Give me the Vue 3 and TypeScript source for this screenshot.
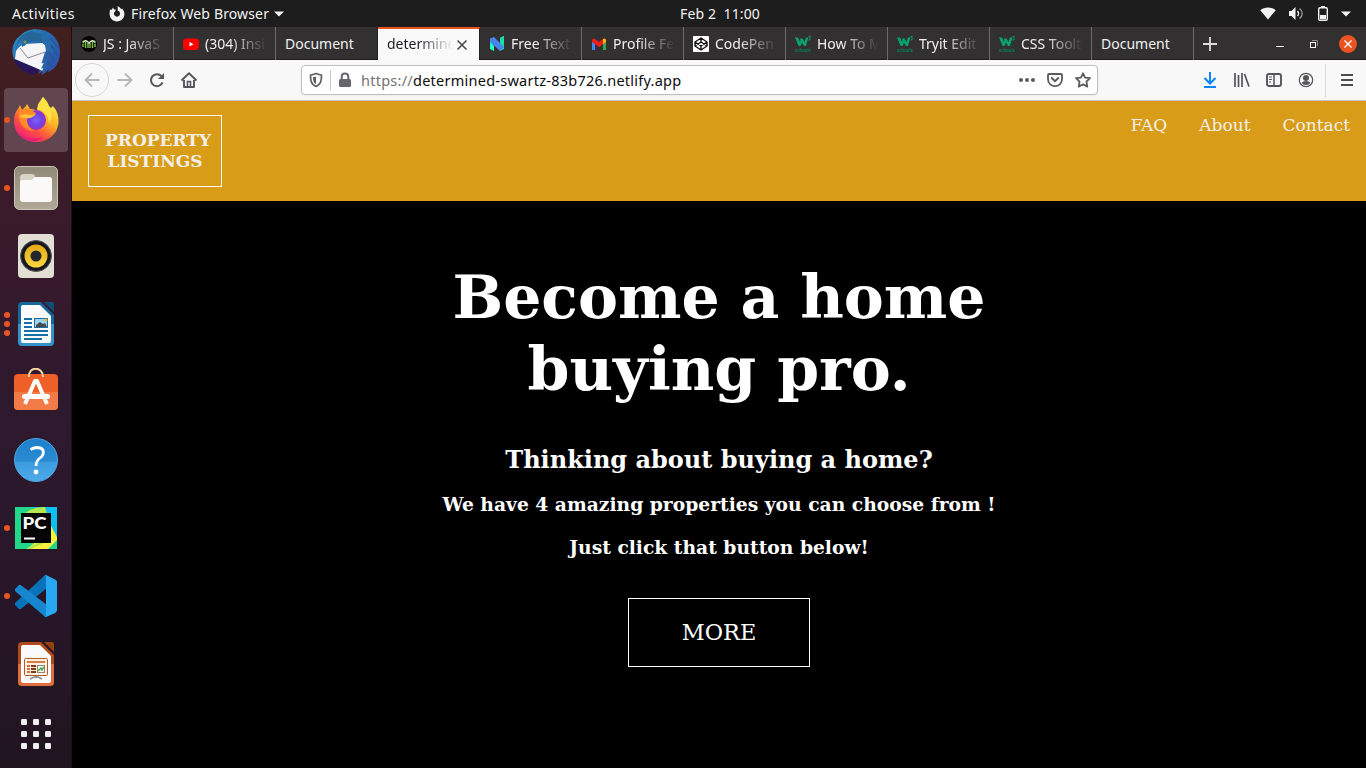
<script setup lang="ts">
interface Tab {
  title: string
  icon: string
  active?: boolean
}

const tabs: Tab[] = [
  { title: 'JS : JavaS', icon: 'js' },
  { title: '(304) Insi', icon: 'youtube' },
  { title: 'Document', icon: '' },
  { title: 'determine', icon: '', active: true },
  { title: 'Free Text', icon: 'netlify' },
  { title: 'Profile Fe', icon: 'gmail' },
  { title: 'CodePen', icon: 'codepen' },
  { title: 'How To M', icon: 'w3' },
  { title: 'Tryit Edit', icon: 'w3' },
  { title: 'CSS Toolt', icon: 'w3' },
  { title: 'Document', icon: '' },
]

interface DockItem {
  name: string
  windows: number
  focused?: boolean
}

const dock: DockItem[] = [
  { name: 'thunderbird', windows: 0 },
  { name: 'firefox', windows: 1, focused: true },
  { name: 'files', windows: 1 },
  { name: 'rhythmbox', windows: 0 },
  { name: 'writer', windows: 3 },
  { name: 'software', windows: 0 },
  { name: 'help', windows: 0 },
  { name: 'pycharm', windows: 1 },
  { name: 'vscode', windows: 1 },
  { name: 'impress', windows: 0 },
  { name: 'apps', windows: 0 },
]

const navLinks: string[] = ['FAQ', 'About', 'Contact']
</script>

<template>
  <div class="desktop">
    <header class="topbar">
      <div class="top-left">
        <span class="activities">Activities</span>
        <svg width="16" height="16" viewBox="0 0 16 16">
          <path d="M1.2 3.2 2.6 4.1 4 1.6 5 3.4 7 3.6 6 5.600 5 6.800C4.700 9 6 10.700 8 10.700c2 0 3-1.400 3-3.100C11 5.900 10 5 8.800 4.800L8.600.300C10.500.900 12 2.500 12.200 3.400L13 2.600C14.700 4 15.400 6 15.400 8.100 15.400 12.300 12.100 15.500 8 15.500S.6 12.300.6 8.100C.6 6.300.7 4.600 1.200 3.200Z" fill="#f2f2f2" />
        </svg>
        <span class="app-name">Firefox Web Browser</span>
        <svg class="caret" width="10" height="6" viewBox="0 0 10 6"><path d="M0 .5H10L5 5.500Z" fill="#f2f2f2" /></svg>
      </div>
      <div class="clock">Feb 2&nbsp; 11:00</div>
      <div class="tray">
        <svg width="16" height="14" viewBox="0 0 16 14"><path d="M.3 3.200C4.500-.300 11.500-.300 15.700 3.200L8 12.500Z" fill="#f2f2f2" /></svg>
        <svg width="16" height="16" viewBox="0 0 16 16">
          <path d="M1 5H3.500L7.500 1V14L3.500 10H1Z" fill="#f2f2f2" />
          <path d="M9.500 5C10.800 6.500 10.800 8.500 9.500 10" fill="none" stroke="#f2f2f2" stroke-width="1.300" />
          <path d="M11.500 2.500C15.200 5.200 15.200 9.800 11.500 12.500" fill="none" stroke="#999" stroke-width="1.300" />
        </svg>
        <svg width="10" height="16" viewBox="0 0 10 16">
          <path d="M3 0H7V2H3Z" fill="#f2f2f2" />
          <rect x=".7" y="1.700" width="8.600" height="12.600" rx="1.300" fill="none" stroke="#f2f2f2" stroke-width="1.400" />
          <rect x="2" y="9" width="6" height="4" fill="#f2f2f2" />
        </svg>
        <svg width="10" height="6" viewBox="0 0 10 6"><path d="M0 .5H10L5 5.500Z" fill="#f2f2f2" /></svg>
      </div>
    </header>

    <div class="workspace">
      <aside class="dock">
        <div v-for="item in dock" :key="item.name" class="dock-item" :class="[item.name, { focused: item.focused }]">
          <span class="dots"><i v-for="n in item.windows" :key="n"></i></span>

          <svg v-if="item.name === 'thunderbird'" width="48" height="48" viewBox="0 0 48 48">
            <defs>
              <linearGradient id="tb" x1="0" y1="0" x2="1" y2="1">
                <stop offset="0" stop-color="#2c9bd0" /><stop offset=".4" stop-color="#276bae" /><stop offset="1" stop-color="#2f4cab" />
              </linearGradient>
            </defs>
            <path d="M8 8C13 2 22 0 30 2 41 4 48 13 48 24 48 35 42 42 36 44L37 41 33 45 29 47 31 43 26 46 28 42 20 41 22 46C11 44 3 37 1 28-1 20 2 12 8 8Z" fill="url(#tb)" />
            <path d="M2 31 27 41 24 46 20 42 23 47C12 45 4 39 2 31Z" fill="#27145b" />
            <path d="M13 16 30 15Q35 17 34 22L32 33 31 43 3 31 4 23Q8 17 13 16Z" fill="#f5f5f8" />
            <path d="M8 20 16 30 33 24" fill="none" stroke="#858b94" stroke-width="1" />
            <path d="M4 22C5 10 10 5 20 3L30 7 33 15 25 13Q16 13 10 19Q9 13 12 10Q6 13 4 22Z" fill="#236698" />
            <path d="M9 12Q9 19 12 18Q16 16 14 12Z" fill="#276ba2" />
            <circle cx="13" cy="14" r="1.500" fill="#96835a" />
            <path d="M28 8Q39 8 44 19L37 16 41 24 34 23 33 17Z" fill="#276ca9" />
            <path d="M38 10 46 20M39 17 45 27M37 24 43 34M35 33 40 39" stroke="#235393" stroke-width="1.200" />
            <path d="M34 24 31 34 34 33 31 39 34 38 31 43" fill="none" stroke="#2761a8" stroke-width="2" />
          </svg>

          <svg v-else-if="item.name === 'firefox'" width="48" height="48" viewBox="0 0 48 48">
            <defs>
              <linearGradient id="fxa" x1=".8" y1=".1" x2=".25" y2=".95">
                <stop offset="0" stop-color="#fff04b" /><stop offset=".4" stop-color="#ffae24" /><stop offset=".7" stop-color="#ff5340" /><stop offset="1" stop-color="#ef2079" />
              </linearGradient>
              <radialGradient id="fxb"><stop offset="0" stop-color="#7b62ff" /><stop offset=".65" stop-color="#7242dc" /><stop offset="1" stop-color="#9a2fc8" /></radialGradient>
            </defs>
            <path d="M8 9 10 14 14 10 15 8 18 13Q23 13 25 15L26 8 31 1Q36 6 37 10L39 12 41 10Q47 17 46.500 26C46 38 36 46 24 46 11 46 2 37 2 25Q2 17 6 13Z" fill="url(#fxa)" />
            <circle cx="24" cy="24" r="10" fill="url(#fxb)" />
            <path d="M8 14Q15 11 19 14L24 17Q22 21 15 22Q14 31 23 35Q13 35 9 28Q5 20 8 14Z" fill="#ff8a26" />
            <path d="M7 20Q12 17 18 19L24 18Q20 23 14 22Q9 22 7 20Z" fill="#ffc23a" />
            <path d="M25 13 31 1Q35 6 37 11Q42 20 37 28Q37 16 25 13Z" fill="#ffe345" />
            <path d="M3 31C8 42 20 45 31 41Q24 48 13 42Q6 38 3 31Z" fill="#ec1d78" />
          </svg>

          <svg v-else-if="item.name === 'files'" width="48" height="48" viewBox="0 0 48 48">
            <defs><linearGradient id="fi" x2="0" y2="1"><stop stop-color="#928a78" /><stop offset="1" stop-color="#b0a895" /></linearGradient></defs>
            <rect x="2.500" y="2.500" width="43" height="43" rx="5" fill="url(#fi)" stroke="#c9c4b7" />
            <path d="M8 14Q8 10 12 10H20Q23 10 23 13H37Q40 13 40 16V35H8Z" fill="#d8d4c7" />
            <path d="M8 18Q8 16 11 16H20L23 13H37Q40 13 40 16V35Q40 38 37 38H11Q8 38 8 35Z" fill="#faf9f7" />
          </svg>

          <svg v-else-if="item.name === 'rhythmbox'" width="48" height="48" viewBox="0 0 48 48">
            <defs><linearGradient id="rb" x2="0" y2="1"><stop stop-color="#e2a915" /><stop offset="1" stop-color="#fbd83f" /></linearGradient></defs>
            <rect x="6" y="2" width="36" height="44" rx="4" fill="#e3dfd4" />
            <circle cx="24" cy="24" r="15.500" fill="#1b1d22" stroke="#55565a" />
            <circle cx="24" cy="24" r="13.500" fill="#15171c" />
            <circle cx="24" cy="24" r="11.500" fill="url(#rb)" />
            <circle cx="24" cy="24" r="5.500" fill="#25272c" />
          </svg>

          <svg v-else-if="item.name === 'writer' || item.name === 'impress'" width="48" height="48" viewBox="0 0 48 48">
            <path d="M10 2H29L42 15V42Q42 46 38 46H10Q6 46 6 42V6Q6 2 10 2Z" :fill="item.name === 'writer' ? '#14689b' : '#b14918'" />
            <path d="M6 24H42V42Q42 46 38 46H10Q6 46 6 42Z" :fill="item.name === 'writer' ? '#3494ca' : '#df6c3a'" />
            <path d="M9 7Q9 5 11 5H28L39 16V41Q39 43 37 43H11Q9 43 9 41Z" fill="#fafafa" />
            <path d="M32 2H40Q42 2 42 4V12Z" :fill="item.name === 'writer' ? '#124d74' : '#93400f'" />
            <template v-if="item.name === 'writer'">
              <path d="M12 19H20M12 23H20M12 27H20M12 31H36M12 35H36M12 39H30" stroke="#1670a7" stroke-width="2" />
              <rect x="22.500" y="18.500" width="13" height="9" fill="#9ed3ee" stroke="#1670a7" />
              <path d="M24 27V25L28 22 31 24 33 23 35 27Z" fill="#494949" />
              <circle cx="34" cy="20" r="1.500" fill="#eebd2b" />
            </template>
            <template v-else>
              <rect x="12.500" y="18.500" width="23" height="17" rx="1" fill="#fff0e6" stroke="#b45b25" />
              <path d="M15 22H33" stroke="#dc7b42" stroke-width="2" />
              <path d="M15 26H18M15 29H18M15 32H18" stroke="#df6c3a" stroke-width="2" />
              <path d="M19 26H24M19 29H24M19 32H24" stroke="#813b13" stroke-width="2" />
              <rect x="25.500" y="25.500" width="7" height="7" fill="#fff" stroke="#888" />
              <path d="M26 31 29 28 30 30 32 27" fill="none" stroke="#4ba33f" stroke-width="1.500" />
              <path d="M18 39 22 37H26L30 39M24 36V38" fill="none" stroke="#888c91" stroke-width="1.700" />
            </template>
          </svg>

          <svg v-else-if="item.name === 'software'" width="48" height="48" viewBox="0 0 48 48">
            <rect x="2" y="6" width="44" height="36" rx="4" fill="#ef6029" />
            <path d="M2 24H46V38Q46 42 42 42H6Q2 42 2 38Z" fill="#f27b48" />
            <path d="M17 9C16-2 31-2 31 9" fill="none" stroke="#f3d6a0" stroke-width="2" />
            <path d="M13 36 23 13H25L35 36" fill="none" stroke="#fff" stroke-width="4" stroke-linejoin="round" />
            <rect x="10" y="26" width="28" height="5" rx="2.500" fill="#fff" />
          </svg>

          <svg v-else-if="item.name === 'help'" width="48" height="48" viewBox="0 0 48 48">
            <defs><linearGradient id="hp" x2="0" y2="1"><stop stop-color="#1d7fca" /><stop offset=".53" stop-color="#2a8bd2" /><stop offset=".56" stop-color="#3c9cdf" /><stop offset="1" stop-color="#4eabe8" /></linearGradient></defs>
            <circle cx="24" cy="24" r="21.500" fill="url(#hp)" stroke="#4ba6e2" />
            <path d="M18.500 13.500Q22 11.500 25 11.500C34 12 32 19 28 22Q24 25 24 30" fill="none" stroke="#fff" stroke-width="2.800" />
            <circle cx="24" cy="36" r="2.400" fill="#fff" />
          </svg>

          <svg v-else-if="item.name === 'pycharm'" width="48" height="48" viewBox="0 0 48 48">
            <rect x="3" y="3" width="42" height="42" fill="#21d789" />
            <path d="M20 3H45V33L38 16 30 8Z" fill="#0bbff0" />
            <path d="M17 9 34 3 37 9 45 30V36L36 45H15L26 36Z" fill="#f7f23c" />
            <path d="M13 9Q23 2 34 3L36 9Z" fill="#b5e84c" />
            <path d="M33 3H45V33L38 20Z" fill="#0bbff0" />
            <path d="M14 45 25 39H32L19 45Z" fill="#b5e84c" />
            <rect x="9" y="9" width="30" height="30" fill="#050505" />
            <rect x="12" y="33.500" width="11" height="2" fill="#fff" />
            <text x="10.500" y="24.500" class="pc-mark" textLength="24" lengthAdjust="spacingAndGlyphs">PC</text>
          </svg>

          <svg v-else-if="item.name === 'vscode'" width="48" height="48" viewBox="0 0 48 48">
            <path d="M3 33 7 37Q8 38 10 36L35 16V3Q33 2 31 5L3 31Z" fill="#0873ba" />
            <path d="M3 17 7 13Q8 12 10 14L35 33V45Q33 46 31 43L3 19Z" fill="#1687cf" />
            <path d="M34 3 44 8Q45 9 45 10V38Q45 40 43 41L34 45Z" fill="#29a8f2" />
          </svg>

          <svg v-else width="48" height="48" viewBox="0 0 48 48">
            <g v-for="r in 3" :key="r"><rect v-for="c in 3" :key="c" :x="9 + (c - 1) * 12" :y="9 + (r - 1) * 12" width="6" height="6" rx="1.200" fill="#eeeeec" /></g>
          </svg>
        </div>
      </aside>

      <main class="browser">
        <div class="tabstrip">
          <div v-for="(tab, i) in tabs" :key="i" class="tab" :class="{ active: tab.active, before: i === 2 }">
            <svg v-if="tab.icon" class="favicon" width="16" height="16" viewBox="0 0 16 16">
              <template v-if="tab.icon === 'js'">
                <circle cx="8" cy="8" r="8" fill="#050505" />
                <path d="M2 11V7.500M4.500 12V6M7 12V7M9 12V7M11.500 12V6M14 11V7.500" stroke="#79b940" stroke-width="1.500" />
                <path d="M1.500 6.500Q4 3.500 7 6L8 7 9 6Q12 3.500 14.500 6.500" fill="none" stroke="#c5dcae" stroke-width="1.600" />
              </template>
              <template v-else-if="tab.icon === 'youtube'">
                <rect x="0" y="2.500" width="16" height="11.500" rx="3" fill="#f00" /><path d="M6.500 6V10.500L10.500 8.200Z" fill="#fff" />
              </template>
              <template v-else-if="tab.icon === 'netlify'">
                <path d="M1 3 5 6V15L1 12Z" fill="#19e2ad" /><path d="M11 2 15 0V13L11 15Z" fill="#16dda9" /><path d="M1 2.500 5 1 15 11 11 15 1 6Z" fill="#4b83ec" /><path d="M11 2 15 0V11L11 7Z" fill="#16dda9" /><path d="M1 7 5 11V15L1 13Z" fill="#2cfac0" />
              </template>
              <template v-else-if="tab.icon === 'gmail'">
                <path d="M1 4V14H4V7" fill="#4285f4" /><path d="M12 7V14H15V4Z" fill="#34a853" /><path d="M1 4Q2 1.500 4 3L8 6 12 3Q14 1.500 15 4V6L8 11 1 6Z" fill="#f01c1c" /><path d="M12 3Q14 1.500 15 4V6L12 8Z" fill="#fbbc04" />
              </template>
              <template v-else-if="tab.icon === 'codepen'">
                <rect width="16" height="16" rx="1" fill="#fff" /><path d="M8 2 14 6V10L8 14 2 10V6ZM2 6 8 10 14 6M2 10 8 6 14 10M8 2V6M8 10V14" fill="none" stroke="#111" stroke-width="1.400" />
              </template>
              <template v-else>
                <path d="M0 1.500H3L5 6 5.500 4 5 2.500H7.500L9.500 6 11 1.500H13.500L10.800 10H9L7 6.500 5.500 10H3.600Z" fill="#04a66d" />
                <path d="M13.500.500H15.500L14.500 2Q16 2.500 15 3.800L13.500 4" fill="none" stroke="#04a66d" stroke-width=".9" />
                <text x="0" y="15.500" class="w3-word" textLength="16" lengthAdjust="spacingAndGlyphs">schools</text>
              </template>
            </svg>
            <span class="tab-title">{{ tab.title }}</span>
            <svg v-if="tab.active" class="tab-close" width="12" height="12" viewBox="0 0 12 12"><path d="M1.500 1.500 10.500 10.500M10.500 1.500 1.500 10.500" stroke="#4b4b4f" stroke-width="1.600" /></svg>
          </div>
          <svg class="new-tab" width="14" height="14" viewBox="0 0 14 14"><path d="M7 0V14M0 7H14" stroke="#dedede" stroke-width="1.800" /></svg>
          <div class="win-controls">
            <svg width="8" height="14" viewBox="0 0 8 14"><path d="M0 9.500H8" stroke="#f6f6f6" /></svg>
            <svg width="8" height="8" viewBox="0 0 8 8"><path d="M2 .5H7.500V6" fill="none" stroke="#8c8a8b" /><rect x=".5" y="2.500" width="5" height="5" fill="none" stroke="#fff" /></svg>
            <svg width="18" height="18" viewBox="0 0 18 18"><circle cx="9" cy="9" r="9" fill="#e95420" /><path d="M5.500 5.500 12.500 12.500M12.500 5.500 5.500 12.500" stroke="#fff" stroke-width="1.300" /></svg>
          </div>
        </div>

        <div class="toolbar">
          <span class="back">
            <svg width="16" height="16" viewBox="0 0 16 16"><path d="M15.500 8H1M8 1.500 1.500 8 8 14.500" fill="none" stroke="#b7b7b8" stroke-width="1.800" /></svg>
          </span>
          <svg class="forward" width="16" height="16" viewBox="0 0 16 16"><path d="M.5 8H15M8 1.500 14.500 8 8 14.500" fill="none" stroke="#b7b7b8" stroke-width="1.800" /></svg>
          <svg class="reload" width="16" height="16" viewBox="0 0 16 16"><path d="M13.500 10.500A6 6 0 1 1 12.500 4.200" fill="none" stroke="#55555a" stroke-width="2" /><path d="M15 1V7H9Z" fill="#55555a" /></svg>
          <svg class="home" width="18" height="16" viewBox="0 0 18 16"><path d="M1.500 8.500 9 1.200 16.500 8.500M4 8V15H14V8" fill="none" stroke="#55555a" stroke-width="1.900" stroke-linejoin="round" /><path d="M7.500 14V9.500H10.500V14" fill="none" stroke="#55555a" stroke-width="1.600" /></svg>
          <div class="urlbar">
            <svg width="14" height="16" viewBox="0 0 14 16"><path d="M7 1.500Q10 2.600 12.500 3C12.500 9 12 12 7 14.500 2 12 1.500 9 1.500 3Q4 2.600 7 1.500Z" fill="none" stroke="#5e5e62" stroke-width="1.700" stroke-linejoin="round" /><path d="M7 4.500Q5.500 5 4 5.200C4 9 4.600 10.500 7 12Z" fill="#5e5e62" /></svg>
            <i class="url-sep"></i>
            <svg class="lock" width="14" height="16" viewBox="0 0 14 16"><rect x="1" y="7" width="12" height="8" rx="1.500" fill="#67676b" /><path d="M3.700 8V4.700C3.700 .5 10.300 .5 10.300 4.700V8" fill="none" stroke="#67676b" stroke-width="2" /></svg>
            <span class="url"><span class="scheme">https://</span>determined-swartz-83b726.netlify.app</span>
            <div class="url-actions">
              <svg width="16" height="16" viewBox="0 0 16 16"><g fill="#5b5b5f"><circle cx="2" cy="8" r="2" /><circle cx="8" cy="8" r="2" /><circle cx="14" cy="8" r="2" /></g></svg>
              <svg width="16" height="16" viewBox="0 0 16 16"><path d="M2 2H14Q15 2 15 3V7C15 16.500 1 16.500 1 7V3Q1 2 2 2Z" fill="none" stroke="#5b5b5f" stroke-width="1.800" /><path d="M4.700 6 8 9.200 11.300 6" fill="none" stroke="#5b5b5f" stroke-width="2" stroke-linecap="round" /></svg>
              <svg width="16" height="16" viewBox="0 0 16 16"><path d="M8 1.300 10.100 5.600 15 6.200 11.400 9.700 12.300 14.600 8 12.200 3.700 14.600 4.600 9.700 1 6.200 5.900 5.600Z" fill="none" stroke="#5b5b5f" stroke-width="1.800" stroke-linejoin="round" /></svg>
            </div>
          </div>
          <div class="tools">
            <svg width="14" height="16" viewBox="0 0 14 16"><path d="M7 0V11M1.500 6 7 11.500 12.500 6M1 15H13" fill="none" stroke="#0a84ff" stroke-width="2" /></svg>
            <svg width="16" height="16" viewBox="0 0 16 16"><path d="M1 1V15M4.500 3V15M8 1V15M10.500 2 15 14.500" fill="none" stroke="#55555a" stroke-width="1.700" /></svg>
            <svg width="16" height="16" viewBox="0 0 16 16"><rect x="1" y="2" width="14" height="12" rx="2" fill="none" stroke="#55555a" stroke-width="1.900" /><path d="M8 2V14" stroke="#55555a" stroke-width="1.500" /><path d="M3 5H6M3 7.500H6M3 10H5" stroke="#55555a" /></svg>
            <svg width="16" height="16" viewBox="0 0 16 16"><circle cx="8" cy="8" r="6.700" fill="none" stroke="#55555a" stroke-width="1.200" /><circle cx="8" cy="6" r="3" fill="#55555a" /><path d="M3.500 11Q5 9 8 9T12.500 11Q11 13 8 13T3.500 11Z" fill="#55555a" /></svg>
            <i class="tool-sep"></i>
            <svg width="12" height="14" viewBox="0 0 12 14"><path d="M0 2H12M0 7H12M0 12H12" stroke="#4c4c50" stroke-width="2" /></svg>
          </div>
        </div>

        <section class="page">
          <nav class="site-nav">
            <div class="logo">PROPERTY LISTINGS</div>
            <div class="links"><a v-for="link in navLinks" :key="link">{{ link }}</a></div>
          </nav>
          <div class="hero">
            <h1>Become a home<br />buying pro.</h1>
            <h2>Thinking about buying a home?</h2>
            <h3>We have 4 amazing properties you can choose from !</h3>
            <h3>Just click that button below!</h3>
            <a class="more">MORE</a>
          </div>
        </section>
      </main>
    </div>
  </div>
</template>

<style>
body {
  margin: 0;
  overflow: hidden;
}
</style>

<style scoped>
.desktop {
  width: 1366px;
  height: 768px;
  display: flex;
  flex-direction: column;
  overflow: hidden;
  background: #000;
  font-family: "Noto Sans", "Open Sans", sans-serif;
  font-size: 14px;
}
svg {
  display: block;
  flex: none;
}
.topbar {
  height: 27px;
  flex: none;
  display: grid;
  grid-template-columns: 680px 90px 1fr;
  align-items: center;
  background: #1d1d1d;
  color: #f2f2f2;
  line-height: 27px;
  white-space: pre;
}
.top-left {
  display: flex;
  align-items: center;
  padding-left: 12px;
}
.activities {
  width: 97px;
  letter-spacing: 0.45px;
}
.app-name {
  width: 138px;
  margin-left: 6px;
  letter-spacing: 0.14px;
}
.caret {
  margin-left: 5px;
}
.clock {
  letter-spacing: 0.12px;
}
.tray {
  display: flex;
  align-items: center;
  justify-content: flex-end;
  gap: 12px;
  padding-right: 15px;
}
.tray svg:nth-child(2) {
  margin-right: 2px;
}
.tray svg:nth-child(3) {
  margin-right: 1px;
}
.workspace {
  flex: 1;
  min-height: 0;
  display: flex;
}
.dock {
  width: 72px;
  box-sizing: border-box;
  flex: none;
  overflow: hidden;
  border-right: 1px solid #1b0f1b;
  background: linear-gradient(#42201f 0, #3b1b2a 22%, #2f192e 50%, #271628 78%, #211520 100%);
}
.dock-item {
  height: 64px;
  margin: 0 3px 4px 4px;
  display: flex;
  align-items: center;
  border-radius: 4px;
}
.dock-item:first-child {
  margin-top: -7px;
}
.dock-item.apps {
  margin-top: 6px;
}
.focused {
  background: #62464f;
}
.dots {
  width: 8px;
  flex: none;
  display: flex;
  flex-direction: column;
  gap: 3px;
}
.dots i {
  width: 6px;
  height: 6px;
  border-radius: 50%;
  background: #e95420;
}
.pc-mark {
  font: 900 17px Lato, sans-serif;
  fill: #fff;
}
.browser {
  flex: 1;
  min-width: 0;
  display: flex;
  flex-direction: column;
}
.tabstrip {
  height: 33px;
  flex: none;
  display: flex;
  align-items: center;
  background: #333031;
  box-shadow: inset 0 -1px #1f1d1e;
  color: #f0f0f0;
}
.tab {
  width: 102px;
  height: 33px;
  box-sizing: border-box;
  flex: none;
  display: flex;
  align-items: center;
  gap: 6px;
  padding: 0 7px 0 9px;
  border-right: 1px solid #6b696a;
  line-height: 34px;
}
.tab.before {
  border-right-color: #222;
}
.tab.active {
  background: #f9f9fa;
  border-top: 2px solid #e95420;
  border-right-color: #222;
  color: #1c1c20;
  line-height: 30px;
  padding-right: 11px;
  gap: 0;
}
.tab-title {
  flex: 1;
  min-width: 0;
  height: 100%;
  white-space: nowrap;
}
.favicon + .tab-title {
  -webkit-mask-image: linear-gradient(to right, #000 24px, transparent 62px);
  mask-image: linear-gradient(to right, #000 24px, transparent 62px);
}
.active .tab-title {
  -webkit-mask-image: linear-gradient(to right, #000 30px, transparent 66px);
  mask-image: linear-gradient(to right, #000 30px, transparent 66px);
}
.w3-word {
  font: bold 4.500px "Noto Sans", sans-serif;
  fill: #087a54;
}
.new-tab {
  margin-left: 9px;
}
.win-controls {
  flex: 1;
  display: flex;
  align-items: center;
  justify-content: flex-end;
  padding: 1px 9px 0 0;
}
.win-controls svg:nth-child(2) {
  margin: 0 21px 0 26px;
}
.toolbar {
  height: 41px;
  flex: none;
  box-sizing: border-box;
  display: flex;
  align-items: center;
  padding-left: 3px;
  background: #f8f8f8;
  border-bottom: 1px solid #c4c4c5;
}
.back {
  width: 32px;
  height: 32px;
  display: grid;
  place-items: center;
  border: 1px solid #d7d7d8;
  border-radius: 50%;
}
.forward {
  margin-left: 8px;
}
.reload {
  margin-left: 16px;
}
.home {
  margin-left: 15px;
}
.urlbar {
  width: 797px;
  height: 30px;
  box-sizing: border-box;
  flex: none;
  display: flex;
  align-items: center;
  margin-left: 103px;
  padding: 0 6px 0 7px;
  border: 1px solid #bebebf;
  border-radius: 4px;
  background: #fff;
  box-shadow: 0 1px 3px rgba(0, 0, 0, 0.06);
}
.url-sep {
  width: 1px;
  height: 21px;
  margin: 0 7px;
  background: #c9c9ca;
}
.url {
  margin-left: 9px;
  color: #0c0c0d;
  font-size: 14.500px;
  letter-spacing: 0.250px;
  white-space: nowrap;
}
.scheme {
  color: #737375;
}
.url-actions {
  flex: 1;
  display: flex;
  justify-content: flex-end;
  gap: 12px;
}
.tools {
  flex: 1;
  display: flex;
  align-items: center;
  gap: 16px;
  padding-left: 105px;
}
.tools svg:first-child {
  margin-right: 1px;
}
.tool-sep {
  width: 1px;
  height: 33px;
  margin: 0 -1px 0 -5px;
  background: #d9d9da;
}
.page {
  flex: 1;
  min-height: 0;
  background: #000;
  color: #fff;
  font-family: "DejaVu Serif", serif;
}
.site-nav {
  height: 100px;
  box-sizing: border-box;
  display: flex;
  justify-content: space-between;
  padding: 14px 16px;
  background: #d99c18;
  color: #f3efe9;
}
.logo {
  width: 134px;
  height: 72px;
  box-sizing: border-box;
  border: 1px solid #fff;
  padding: 14px 16px;
  font-size: 17px;
  font-weight: bold;
  line-height: 21px;
  text-align: center;
}
.links {
  display: flex;
  gap: 32px;
  font-size: 17px;
  line-height: 20px;
}
.hero {
  display: flex;
  flex-direction: column;
  align-items: center;
  padding-top: 60px;
  text-align: center;
}
h1,
h2,
h3 {
  margin: 0;
  font-weight: bold;
}
h1 {
  font-size: 60px;
  line-height: 72px;
}
h2 {
  margin-top: 40px;
  font-size: 24px;
  line-height: 29px;
}
h3 {
  margin-top: 20px;
  font-size: 18.720px;
  line-height: 23px;
}
h2 + h3 {
  margin-top: 19px;
}
.more {
  width: 182px;
  height: 69px;
  box-sizing: border-box;
  margin-top: 39px;
  border: 1px solid #fff;
  font-size: 22.400px;
  line-height: 67px;
}
</style>
